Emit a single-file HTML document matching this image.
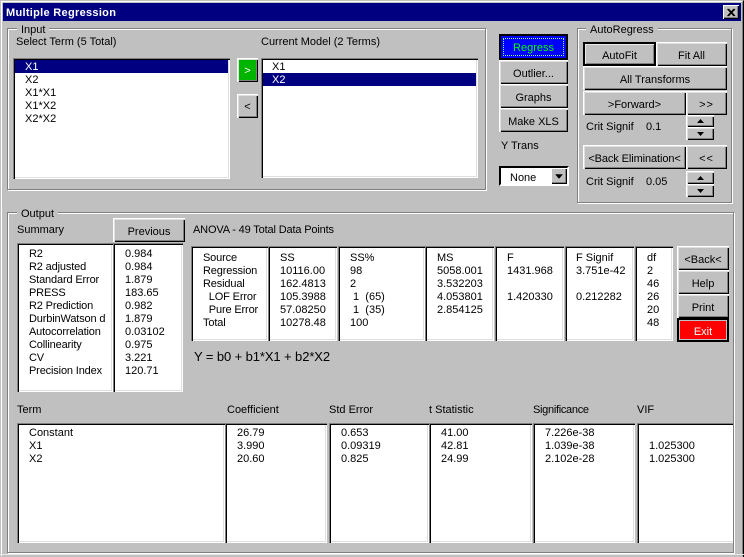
<!DOCTYPE html>
<html><head><meta charset="utf-8"><style>
html,body{margin:0;padding:0}
body{width:744px;height:557px;overflow:hidden;position:relative;background:#c0c0c0;font:11px/13px "Liberation Sans",sans-serif;color:#000}
div{position:absolute;box-sizing:border-box}
.t{white-space:pre;margin-top:1px}
.l{letter-spacing:-.15px}
.g{border:1px solid #808080;box-shadow:1px 1px 0 #fff,inset 1px 1px 0 #fff}
.lg{background:#c0c0c0;padding:0 4px;height:13px;line-height:13px;white-space:pre;margin-top:1px}
.s{background:#fff;box-shadow:inset 1px 1px 0 #808080,inset 2px 2px 0 #000,inset -1px -1px 0 #fff,inset -2px -2px 0 #dfdfdf}
.b{background:#c0c0c0;text-align:center;box-shadow:inset 1px 1px 0 #fff,inset 2px 2px 0 #dfdfdf,inset -1px -1px 0 #000,inset -2px -2px 0 #808080;display:flex;align-items:center;justify-content:center;white-space:pre;padding-top:4px}
.n{padding-top:0}
.b.k{box-shadow:inset 0 0 0 2px #000,inset 3px 3px 0 #e8e8e8,inset -3px -3px 0 #808080}
.sel{background:#000080}
.w{color:#fff}
</style></head><body>
<!-- window frame -->
<div style="left:0;top:0;width:744px;height:557px;border-right:1px solid #000;border-top:1px solid #c0c0c0"></div>
<div style="left:1px;top:1px;width:742px;height:555px;border-top:1px solid #fff;border-left:1px solid #fff;border-right:1px solid #808080"></div>
<div style="left:0;top:554px;width:744px;height:1px;background:#e8e8e8"></div>
<!-- title -->
<div style="left:3px;top:3px;width:738px;height:18px;background:#000080"></div>
<div class="t w" style="left:6px;top:5px;font-weight:bold;font-size:11px;letter-spacing:.3px;line-height:14px">Multiple Regression</div>
<div class="b n" style="left:723px;top:5px;width:16px;height:14px;box-shadow:inset 1px 1px 0 #fff,inset -1px -1px 0 #000,inset -2px -2px 0 #808080"><svg width="10" height="9" viewBox="0 0 10 9" style="display:block"><path d="M1.5 1L8 8M2.5 1L9 8M8 1L1.5 8M9 1L2.5 8" stroke="#000" stroke-width="1.1" fill="none"/></svg></div>

<!-- Input group -->
<div class="g" style="left:7px;top:28px;width:479px;height:162px"></div>
<div class="lg" style="left:17px;top:23px">Input</div>
<div class="t" style="left:16px;top:35px">Select Term (5 Total)</div>
<div class="t" style="left:261px;top:35px">Current Model (2 Terms)</div>
<div class="s" style="left:13px;top:58px;width:217px;height:121px"></div>
<div class="sel" style="left:15px;top:60px;width:213px;height:13px"></div>
<div class="t w" style="left:25px;top:60px">X1</div>
<div class="t" style="left:25px;top:73px">X2
X1*X1
X1*X2
X2*X2</div>
<div class="b w n" style="left:237px;top:58px;width:21px;height:24px;background:#00b400;padding-top:2px">&gt;</div>
<div class="b n" style="left:237px;top:94px;width:21px;height:24px;padding-top:2px">&lt;</div>
<div class="s" style="left:261px;top:58px;width:217px;height:120px"></div>
<div class="sel" style="left:263px;top:73px;width:213px;height:13px"></div>
<div class="t" style="left:272px;top:60px">X1</div>
<div class="t w" style="left:272px;top:73px">X2</div>

<!-- Center buttons -->
<div class="b" style="left:499px;top:34px;width:69px;height:26px;background:#0000ff;color:#00ff00;box-shadow:inset 0 0 0 2px #000;padding-top:2px">Regress</div>
<div style="left:503px;top:38px;width:61px;height:18px;border:1px dotted #7fff7f"></div>
<div class="b" style="left:499px;top:60px;width:69px;height:24px">Outlier...</div>
<div class="b" style="left:499px;top:84px;width:69px;height:24px">Graphs</div>
<div class="b" style="left:499px;top:108px;width:69px;height:24px">Make XLS</div>
<div class="t" style="left:501px;top:139px">Y Trans</div>
<div style="left:499px;top:166px;width:70px;height:20px;background:#fff;border:2px solid;border-color:#000 #fff #fff #000"></div>
<div class="t" style="left:510px;top:171px">None</div>
<div class="b n" style="left:551px;top:168px;width:16px;height:16px;box-shadow:inset 1px 1px 0 #fff,inset -1px -1px 0 #000,inset -2px -2px 0 #808080"><svg width="8" height="5" style="display:block"><path d="M0.5 0.5H7.5L4 4.5Z" fill="#000" stroke="#000" stroke-width=".5"/></svg></div>

<!-- AutoRegress -->
<div class="g" style="left:577px;top:28px;width:155px;height:175px"></div>
<div class="lg" style="left:586px;top:23px">AutoRegress</div>
<div class="b k" style="left:583px;top:42px;width:73px;height:24px">AutoFit</div>
<div class="b" style="left:656px;top:42px;width:71px;height:24px">Fit All</div>
<div class="b" style="left:583px;top:66px;width:144px;height:24px">All Transforms</div>
<div class="b" style="left:583px;top:91px;width:103px;height:24px">&gt;Forward&gt;</div>
<div class="b" style="left:686px;top:91px;width:41px;height:24px;letter-spacing:1px">&gt;&gt;</div>
<div class="t" style="left:586px;top:120px">Crit Signif</div>
<div class="t" style="left:646px;top:120px">0.1</div>
<div class="b n" style="left:686px;top:115px;width:28px;height:12px"><svg width="7" height="4" style="display:block"><path d="M3.5 0L7 4H0Z"/></svg></div>
<div class="b n" style="left:686px;top:127px;width:28px;height:13px"><svg width="7" height="4" style="display:block"><path d="M0 0H7L3.5 4Z"/></svg></div>
<div class="b" style="left:583px;top:145px;width:103px;height:24px;letter-spacing:-.1px">&lt;Back Elimination&lt;</div>
<div class="b" style="left:686px;top:145px;width:41px;height:24px;letter-spacing:1px">&lt;&lt;</div>
<div class="t" style="left:586px;top:175px">Crit Signif</div>
<div class="t" style="left:646px;top:175px">0.05</div>
<div class="b n" style="left:686px;top:171px;width:28px;height:13px"><svg width="7" height="4" style="display:block"><path d="M3.5 0L7 4H0Z"/></svg></div>
<div class="b n" style="left:686px;top:184px;width:28px;height:13px"><svg width="7" height="4" style="display:block"><path d="M0 0H7L3.5 4Z"/></svg></div>

<!-- Output -->
<div class="g" style="left:7px;top:212px;width:727px;height:341px"></div>
<div class="lg" style="left:17px;top:207px">Output</div>
<div class="t" style="left:17px;top:223px">Summary</div>
<div class="b" style="left:113px;top:218px;width:72px;height:24px">Previous</div>
<div class="t l" style="left:193px;top:223px">ANOVA - 49 Total Data Points</div>

<div class="s" style="left:17px;top:243px;width:96px;height:149px"></div>
<div class="s" style="left:113px;top:243px;width:70px;height:149px"></div>
<div class="t l" style="left:29px;top:247px">R2
R2 adjusted
Standard Error
PRESS
R2 Prediction
DurbinWatson d
Autocorrelation
Collinearity
CV
Precision Index</div>
<div class="t" style="left:125px;top:247px">0.984
0.984
1.879
183.65
0.982
1.879
0.03102
0.975
3.221
120.71</div>

<!-- ANOVA -->
<div class="s" style="left:191px;top:246px;width:77px;height:95px"></div>
<div class="s" style="left:268px;top:246px;width:69px;height:95px"></div>
<div class="s" style="left:338px;top:246px;width:87px;height:95px"></div>
<div class="s" style="left:425px;top:246px;width:69px;height:95px"></div>
<div class="s" style="left:495px;top:246px;width:69px;height:95px"></div>
<div class="s" style="left:565px;top:246px;width:69px;height:95px"></div>
<div class="s" style="left:635px;top:246px;width:38px;height:95px"></div>
<div class="t l" style="left:203px;top:251px">Source
Regression
Residual
  LOF Error
  Pure Error
Total</div>
<div class="t" style="left:280px;top:251px">SS
10116.00
162.4813
105.3988
57.08250
10278.48</div>
<div class="t" style="left:350px;top:251px">SS%
98
2
 1  (65)
 1  (35)
100</div>
<div class="t" style="left:437px;top:251px">MS
5058.001
3.532203
4.053801
2.854125</div>
<div class="t" style="left:507px;top:251px">F
1431.968

1.420330</div>
<div class="t" style="left:576px;top:251px">F Signif
3.751e-42

0.212282</div>
<div class="t" style="left:647px;top:251px">df
2
46
26
20
48</div>
<div class="b" style="left:677px;top:246px;width:52px;height:24px">&lt;Back&lt;</div>
<div class="b" style="left:677px;top:270px;width:52px;height:24px">Help</div>
<div class="b" style="left:677px;top:294px;width:52px;height:24px">Print</div>
<div class="b w" style="left:677px;top:318px;width:52px;height:24px;background:#ff0000;box-shadow:inset 0 0 0 2px #000,inset 0 0 0 3px #c0c0c0">Exit</div>
<div class="t" style="left:194px;top:348px;font-size:13px;line-height:15px;letter-spacing:-.1px">Y = b0 + b1*X1 + b2*X2</div>

<!-- Coefficients -->
<div class="t" style="left:17px;top:403px">Term</div>
<div class="t" style="left:227px;top:403px">Coefficient</div>
<div class="t" style="left:329px;top:403px">Std Error</div>
<div class="t" style="left:429px;top:403px">t Statistic</div>
<div class="t" style="left:533px;top:403px;letter-spacing:-.3px">Significance</div>
<div class="t" style="left:637px;top:403px">VIF</div>
<div class="s" style="left:17px;top:423px;width:208px;height:120px"></div>
<div class="s" style="left:225px;top:423px;width:102px;height:120px"></div>
<div class="s" style="left:329px;top:423px;width:100px;height:120px"></div>
<div class="s" style="left:429px;top:423px;width:103px;height:120px"></div>
<div class="s" style="left:533px;top:423px;width:102px;height:120px"></div>
<div class="s" style="left:637px;top:423px;width:100px;height:120px"></div>
<div style="left:733px;top:420px;width:1px;height:133px;background:#808080"></div>
<div style="left:734px;top:420px;width:1px;height:133px;background:#fff"></div>
<div style="left:735px;top:420px;width:6px;height:133px;background:#c0c0c0"></div>
<div class="t" style="left:29px;top:426px">Constant
X1
X2</div>
<div class="t" style="left:237px;top:426px">26.79
3.990
20.60</div>
<div class="t" style="left:341px;top:426px">0.653
0.09319
0.825</div>
<div class="t" style="left:441px;top:426px">41.00
42.81
24.99</div>
<div class="t" style="left:545px;top:426px">7.226e-38
1.039e-38
2.102e-28</div>
<div class="t" style="left:649px;top:439px">1.025300
1.025300</div>
</body></html>
